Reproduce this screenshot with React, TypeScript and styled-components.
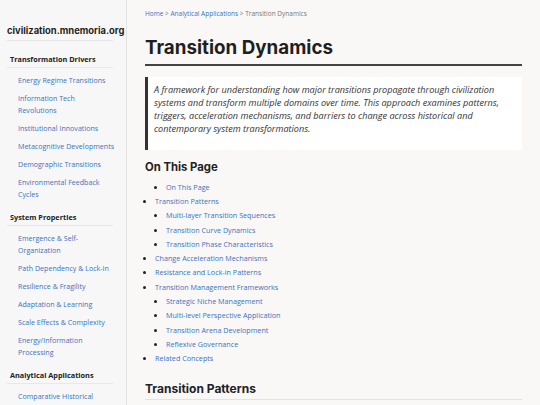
import React from "react";
import styled, { createGlobalStyle } from "styled-components";

const GlobalStyle = createGlobalStyle`
  html, body {
    margin: 0;
    padding: 0;
    background: #f9f8f7;
    font-family: "Open Sans", "Liberation Sans", sans-serif;
    color: #2b2b2b;
  }
  * { box-sizing: border-box; }
`;

interface NavSection {
  title: string;
  links: string[];
}

const sections: NavSection[] = [
  {
    title: "Transformation Drivers",
    links: [
      "Energy Regime Transitions",
      "Information Tech Revolutions",
      "Institutional Innovations",
      "Metacognitive Developments",
      "Demographic Transitions",
      "Environmental Feedback Cycles",
    ],
  },
  {
    title: "System Properties",
    links: [
      "Emergence & Self-Organization",
      "Path Dependency & Lock-In",
      "Resilience & Fragility",
      "Adaptation & Learning",
      "Scale Effects & Complexity",
      "Energy/Information Processing",
    ],
  },
  {
    title: "Analytical Applications",
    links: ["Comparative Historical Analysis", "Future Scenarios"],
  },
];

interface TocItem {
  label?: string;
  children?: string[];
}

const toc: TocItem[] = [
  { children: ["On This Page"] },
  {
    label: "Transition Patterns",
    children: [
      "Multi-layer Transition Sequences",
      "Transition Curve Dynamics",
      "Transition Phase Characteristics",
    ],
  },
  { label: "Change Acceleration Mechanisms" },
  { label: "Resistance and Lock-in Patterns" },
  {
    label: "Transition Management Frameworks",
    children: [
      "Strategic Niche Management",
      "Multi-level Perspective Application",
      "Transition Arena Development",
      "Reflexive Governance",
    ],
  },
  { label: "Related Concepts" },
];

const App = () => {
  return (
    <>
      <GlobalStyle />
      <Page>
        <Sidebar>
          <SiteTitle>civilization.mnemoria.org</SiteTitle>
          {sections.map((s) => (
            <Section key={s.title}>
              <SectionTitle>{s.title}</SectionTitle>
              <NavList>
                {s.links.map((l) => (
                  <NavItem key={l}>
                    <NavLink href="#">{l}</NavLink>
                  </NavItem>
                ))}
              </NavList>
            </Section>
          ))}
        </Sidebar>
        <Main>
          <Breadcrumb>
            <Crumb href="#">Home</Crumb> &gt;{" "}
            <Crumb href="#">Analytical Applications</Crumb> &gt; Transition
            Dynamics
          </Breadcrumb>
          <Title>Transition Dynamics</Title>
          <Summary>
            A framework for understanding how major transitions propagate
            through civilization systems and transform multiple domains over
            time. This approach examines patterns, triggers, acceleration
            mechanisms, and barriers to change across historical and
            contemporary system transformations.
          </Summary>
          <SubHeading>On This Page</SubHeading>
          <TocList>
            {toc.map((item, i) => (
              <TocEntry key={i} $bare={!item.label}>
                {item.label && <TocLink href="#">{item.label}</TocLink>}
                {item.children && (
                  <TocSubList>
                    {item.children.map((c) => (
                      <TocEntry key={c}>
                        <TocLink href="#">{c}</TocLink>
                      </TocEntry>
                    ))}
                  </TocSubList>
                )}
              </TocEntry>
            ))}
          </TocList>
          <SectionHeading>Transition Patterns</SectionHeading>
        </Main>
      </Page>
    </>
  );
};

export default App;

const Page = styled.div`
  display: flex;
  height: 405px;
  overflow: hidden;
`;

const Sidebar = styled.aside`
  width: 127px;
  flex-shrink: 0;
  background: #f7f7f7;
  border-right: 1px solid #e4e4e4;
  padding: 24px 7px 0 7px;
`;

const SiteTitle = styled.div`
  font-family: "Inter", "Open Sans", sans-serif;
  font-weight: 700;
  font-size: 9.4px;
  line-height: 14px;
  color: #1f1f1f;
  padding-bottom: 2px;
  border-bottom: 1px solid #e6e6e6;
  margin-right: 6px;
  white-space: nowrap;
`;

const Section = styled.div`
  margin-top: 12px;

  & + & {
    margin-top: 11px;
  }
`;

const SectionTitle = styled.div`
  font-size: 7.3px;
  line-height: 12px;
  font-weight: 700;
  color: #222;
  padding: 0 3px 2px 3px;
  border-bottom: 1px solid #e8e8e8;
  margin-right: 6px;
`;

const NavList = styled.ul`
  list-style: none;
  margin: 0;
  padding: 6px 4px 0 11px;
`;

const NavItem = styled.li`
  margin-bottom: 6px;
  font-size: 7.1px;
  line-height: 12px;
`;

const NavLink = styled.a`
  color: #3b73c0;
  text-decoration: none;
`;

const Main = styled.main`
  flex: 1;
  padding: 9px 18px 0 18px;
  min-width: 0;
`;

const Breadcrumb = styled.div`
  font-size: 6.5px;
  line-height: 9px;
  color: #777;
`;

const Crumb = styled.a`
  color: #3b73c0;
  text-decoration: none;
`;

const Title = styled.h1`
  font-family: "Inter", "Open Sans", sans-serif;
  font-weight: 700;
  font-size: 18.8px;
  line-height: 24px;
  color: #1f1f1f;
  margin: 18px 0 0 0;
  padding-bottom: 4px;
  border-bottom: 2px solid #444;
`;

const Summary = styled.blockquote`
  margin: 11px 0 0 0;
  background: #fff;
  border-left: 3px solid #333;
  padding: 7px 10px 14px 6px;
  font-style: italic;
  font-size: 9.1px;
  line-height: 12.9px;
  color: #333;
`;

const SubHeading = styled.h2`
  font-family: "Inter", "Open Sans", sans-serif;
  font-weight: 700;
  font-size: 11.3px;
  line-height: 16px;
  color: #222;
  margin: 9px 0 5px 0;
`;

const TocList = styled.ul`
  margin: 0;
  padding: 0 0 0 10px;
  list-style: disc;
`;

const TocSubList = styled.ul`
  margin: 0;
  padding: 0 0 0 11px;
  list-style: disc;
`;

const TocEntry = styled.li<{ $bare?: boolean }>`
  font-size: 7.2px;
  line-height: 14.3px;
  color: #222;
  list-style: ${(p) => (p.$bare ? "none" : "disc")};
`;

const TocLink = styled.a`
  color: #3b73c0;
  text-decoration: none;
`;

const SectionHeading = styled.h2`
  font-family: "Inter", "Open Sans", sans-serif;
  font-weight: 700;
  font-size: 12px;
  line-height: 16px;
  color: #222;
  margin: 16px 0 0 0;
  padding-bottom: 2px;
  border-bottom: 1px solid #e2e2e2;
`;
